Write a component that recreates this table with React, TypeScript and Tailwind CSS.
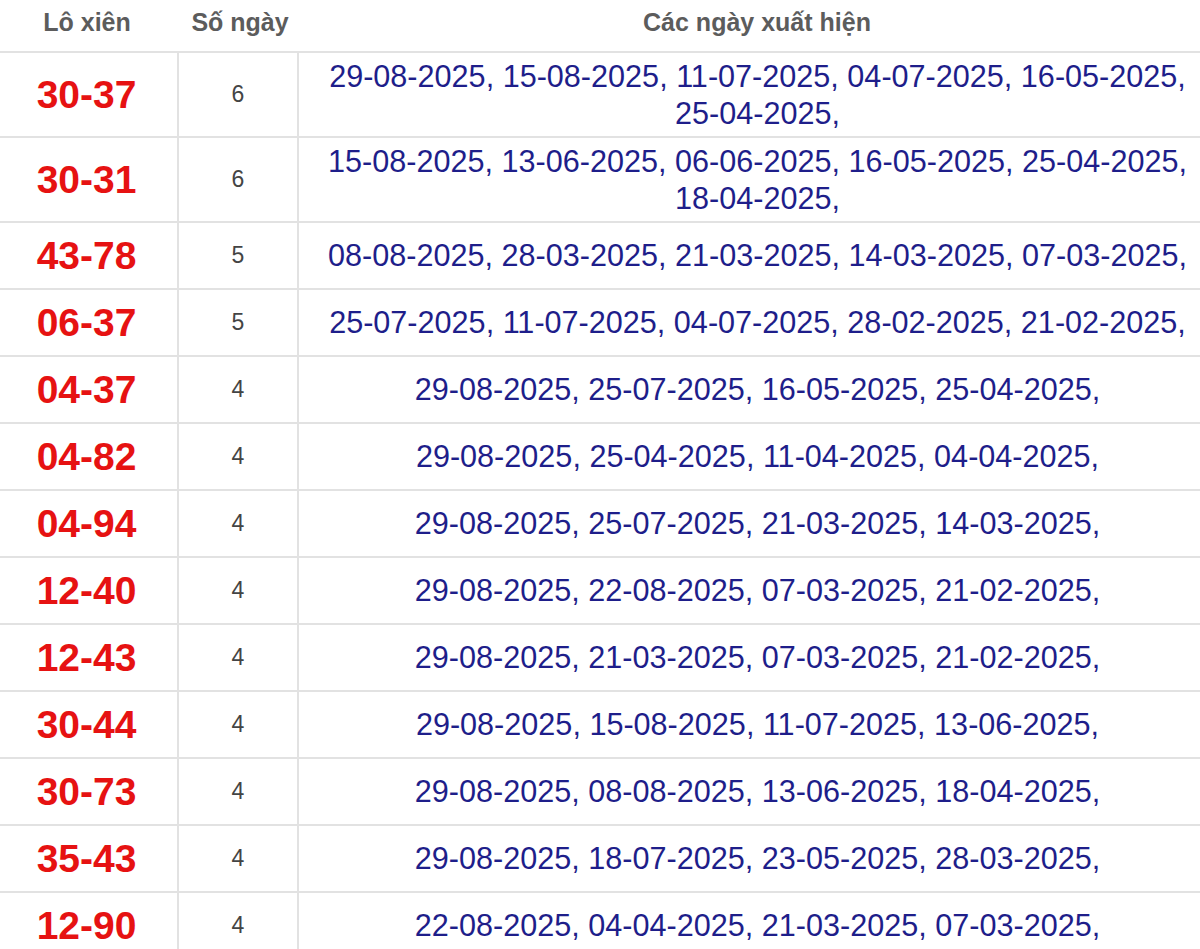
const ROWS: { pair: string; count: number; dates: string[] }[] = [
  { pair: '30-37', count: 6, dates: ['29-08-2025', '15-08-2025', '11-07-2025', '04-07-2025', '16-05-2025', '25-04-2025'] },
  { pair: '30-31', count: 6, dates: ['15-08-2025', '13-06-2025', '06-06-2025', '16-05-2025', '25-04-2025', '18-04-2025'] },
  { pair: '43-78', count: 5, dates: ['08-08-2025', '28-03-2025', '21-03-2025', '14-03-2025', '07-03-2025'] },
  { pair: '06-37', count: 5, dates: ['25-07-2025', '11-07-2025', '04-07-2025', '28-02-2025', '21-02-2025'] },
  { pair: '04-37', count: 4, dates: ['29-08-2025', '25-07-2025', '16-05-2025', '25-04-2025'] },
  { pair: '04-82', count: 4, dates: ['29-08-2025', '25-04-2025', '11-04-2025', '04-04-2025'] },
  { pair: '04-94', count: 4, dates: ['29-08-2025', '25-07-2025', '21-03-2025', '14-03-2025'] },
  { pair: '12-40', count: 4, dates: ['29-08-2025', '22-08-2025', '07-03-2025', '21-02-2025'] },
  { pair: '12-43', count: 4, dates: ['29-08-2025', '21-03-2025', '07-03-2025', '21-02-2025'] },
  { pair: '30-44', count: 4, dates: ['29-08-2025', '15-08-2025', '11-07-2025', '13-06-2025'] },
  { pair: '30-73', count: 4, dates: ['29-08-2025', '08-08-2025', '13-06-2025', '18-04-2025'] },
  { pair: '35-43', count: 4, dates: ['29-08-2025', '18-07-2025', '23-05-2025', '28-03-2025'] },
  { pair: '12-90', count: 4, dates: ['22-08-2025', '04-04-2025', '21-03-2025', '07-03-2025'] },
]

export default function App() {
  return (
    <div className="w-[1200px] h-[949px] overflow-hidden bg-white font-['Liberation_Sans',Arial,sans-serif]">
      <table className="w-[1216px] table-fixed border-collapse">
        <colgroup>
          <col className="w-[178px]" />
          <col className="w-[120px]" />
          <col />
        </colgroup>
        <thead>
          {/* Header row: no vertical rules */}
          <tr className="border-b-2 border-[#e2e2e2]">
            <th className="h-[52px] pb-[6px] pr-1 text-center align-middle text-[25px] font-bold text-[#5c5c5c]">Lô xiên</th>
            <th className="h-[52px] pb-[6px] pl-1 text-center align-middle text-[25px] font-bold text-[#5c5c5c]">Số ngày</th>
            <th className="h-[52px] pb-[6px] text-center align-middle text-[25px] font-bold text-[#5c5c5c]">Các ngày xuất hiện</th>
          </tr>
        </thead>
        <tbody>
          {ROWS.map(row => (
            <tr key={row.pair} className="border-b-2 border-[#e2e2e2]">
              <td className="py-[5px] pr-1 text-center align-middle text-[39px] leading-[55px] font-bold text-[#e61212]">
                {row.pair}
              </td>
              <td className="py-[5px] border-l-2 border-[#e2e2e2] text-center align-middle text-[23px] text-[#444]">
                {row.count}
              </td>
              <td className="py-[5px] px-2 border-l-2 border-[#e2e2e2] text-center align-middle text-[30.6px] leading-[36.5px] text-[#1e1e8a]">
                {row.dates.map((d, i) => (
                  <span key={i}>
                    <span className="whitespace-nowrap">{d},</span>
                    {i < row.dates.length - 1 ? ' ' : ''}
                  </span>
                ))}
              </td>
            </tr>
          ))}
        </tbody>
      </table>
    </div>
  )
}
